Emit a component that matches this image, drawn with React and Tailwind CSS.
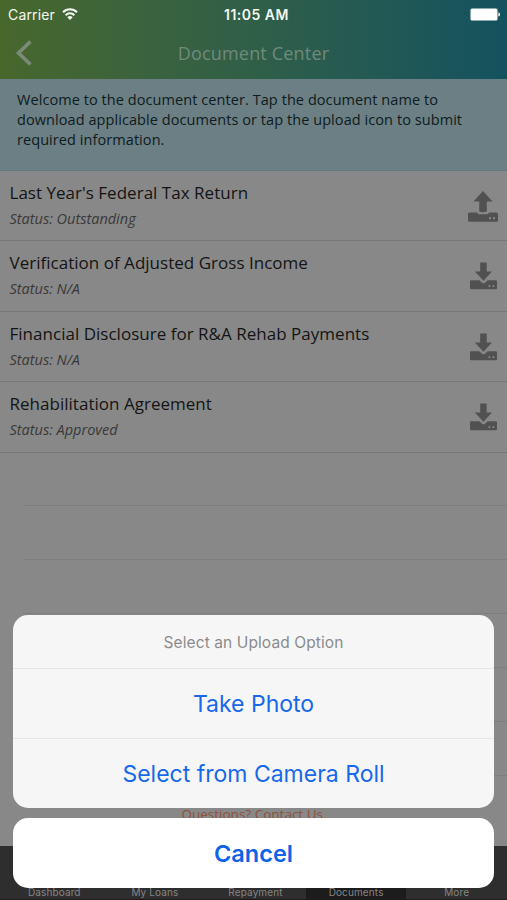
import React from "react";

const documents = [
  { name: "Last Year's Federal Tax Return", status: "Outstanding", upload: true, height: "h-[70px]" },
  { name: "Verification of Adjusted Gross Income", status: "N/A", height: "h-[71px]" },
  { name: "Financial Disclosure for R&A Rehab Payments", status: "N/A", height: "h-[70px]" },
  { name: "Rehabilitation Agreement", status: "Approved", height: "h-[71px]" },
];

const tabs = ["Dashboard", "My Loans", "Repayment", "Documents", "More"];

function WifiIcon() {
  return (
    <svg width="16" height="13" viewBox="0 0 16 13" fill="none" stroke="#f4f8f2" strokeWidth="2">
      <path d="M1 4.2a10 10 0 0 1 14 0" />
      <path d="M3.6 7.2a6.2 6.2 0 0 1 8.8 0" />
      <path d="M8 12.1 5.3 9.3a3.8 3.8 0 0 1 5.4 0z" fill="#f4f8f2" stroke="none" />
    </svg>
  );
}

function BatteryIcon() {
  return (
    <svg width="31" height="13" viewBox="0 0 31 13" fill="#fff">
      <rect x="0.5" y="0.5" width="27" height="12" rx="1.5" />
      <path d="M28.4 4.5c2.2.4 2.2 3.6 0 4z" />
    </svg>
  );
}

function TransferIcon({ upload }) {
  return upload ? (
    <svg width="30" height="31" viewBox="0 0 30 31" fill="#515151">
      <path d="M15 0 24.5 10.5H18.8v10q-3.8 1.5-7.6 0v-10H5.5z" />
      <path d="M1.5 21.5H8.7l1.8 1.7h9l1.8-1.7h7.2q1.5 0 1.5 1.5v6.2q0 1.5-1.5 1.5h-27q-1.5 0-1.5-1.5V23q0-1.5 1.5-1.5z" />
      <path d="M21 26.3h2v2h-2zM25 26.3h2v2h-2z" fill="#888" />
    </svg>
  ) : (
    <svg className="mt-px" width="27" height="28" viewBox="0 0 27 28" fill="#515151">
      <path d="M10.2 0.5h6.5v9h5.3L13.5 18.7 4.8 9.5h5.4z" />
      <path d="M1.2 18.3h8.1l2.7 2.4q1.5 1.1 3 0l2.7-2.4h8.1q1.2 0 1.2 1.2v6.5q0 1.2-1.2 1.2H1.2Q0 27.2 0 26v-6.500q0-1.200 1.200-1.200z" />
      <path d="M18.5 23.2h1.800V25h-1.800zM22.500 23.200h1.800V25h-1.800z" fill="#888" />
    </svg>
  );
}

function Header() {
  return (
    <header className="h-[79px] shrink-0 bg-linear-to-r from-[#47672b] via-[#305f48] to-[#13525f]">
      <div className="grid h-[28px] grid-cols-3 items-center font-['Inter',sans-serif] text-[#f4f8f2]">
        <div className="flex items-center gap-[7px] pl-2">
          <span className="w-[47px] text-[14px] tracking-[0.15px] whitespace-nowrap">Carrier</span>
          <WifiIcon />
        </div>
        <div className="pl-[6px] text-center text-[14px] font-semibold tracking-[0.5px] whitespace-nowrap">11:05 AM</div>
        <div className="flex justify-end pr-[6px]">
          <BatteryIcon />
        </div>
      </div>
      <div className="grid h-[50px] grid-cols-[1fr_auto_1fr] items-center">
        <svg className="ml-[15px]" width="18" height="26" viewBox="0 0 18 26" fill="none" stroke="#7b8b78" strokeWidth="3.6">
          <path d="M15.5 1.5 3.500 13l12 11.500" />
        </svg>
        <h1 className="text-[18px] tracking-[0.18px] whitespace-nowrap text-[#708a7c]">Document Center</h1>
      </div>
    </header>
  );
}

function DocumentRow({ doc }) {
  return (
    <li className={`flex items-start justify-between border-b border-[#777] pl-[9.5px] ${doc.height}`}>
      <div className="pt-[10px] whitespace-nowrap">
        <p className="text-[17px] leading-6 tracking-[0.02px] text-[#141414]">{doc.name}</p>
        <p className="mt-[4px] text-[14.5px] leading-5 text-[#393939] italic">Status: {doc.status}</p>
      </div>
      <div className="flex w-[48px] justify-center pt-[20px]">
        <TransferIcon upload={doc.upload} />
      </div>
    </li>
  );
}

function ActionSheet() {
  return (
    <div className="absolute inset-x-[13px] top-[615px] flex flex-col gap-[10px] text-center font-['Inter',sans-serif] text-[#1768ea]">
      <div className="flex h-[193px] flex-col overflow-hidden rounded-[15px] bg-[#f6f6f6]">
        <div className="flex h-[54px] items-center justify-center border-b border-[#e6e6e8] pt-[2px] text-[15.5px] tracking-[0.1px] text-[#8b8b8d]">
          <span>Select an Upload Option</span>
        </div>
        <button className="h-[70px] border-b border-[#e6e6e8] pt-[2px] text-[23px]">Take Photo</button>
        <button className="h-[69px] pt-[2px] text-[23px]">Select from Camera Roll</button>
      </div>
      <button className="h-[70px] rounded-[15px] bg-white pt-px text-[23.5px] font-semibold text-[#0e61e9]">Cancel</button>
    </div>
  );
}

export default function App() {
  return (
    <div className="relative flex h-[900px] w-[507px] flex-col overflow-hidden bg-[#888] font-['Open_Sans',sans-serif]">
      <Header />
      <section className="h-[92px] shrink-0 border-b border-[#637981] bg-[#6c7f84] pt-[11px] pl-[17px] text-[14.5px] leading-5 tracking-[0.07px] text-[#0d1c20]">
        <p className="whitespace-nowrap">
          Welcome to the document center. Tap the document name to
          <br />
          download applicable documents or tap the upload icon to submit
          <br />
          required information.
        </p>
      </section>
      <ul className="shrink-0">
        {documents.map((doc) => (
          <DocumentRow key={doc.name} doc={doc} />
        ))}
      </ul>
      <div className="-mt-px flex shrink-0 flex-col pl-[23px]">
        {[0, 1, 2, 3, 4, 5].map((line) => (
          <div key={line} className="h-[54px] border-b border-[#7e7e7e]" />
        ))}
      </div>
      <p className="mt-[28px] shrink-0 pl-px text-center text-[13.5px] leading-5 text-[#8f5038]">Questions? Contact Us.</p>
      <nav className="mt-auto grid h-[54px] shrink-0 grid-cols-5 border-b border-[#201a1c] bg-[#2e2e2e] pl-[4px] font-['Inter',sans-serif] text-[10px] tracking-[0.12px] text-[#858585]">
        {tabs.map((tab) => (
          <div key={tab} className={`flex items-end justify-center leading-[13px] ${tab === "Documents" ? "bg-[#1c1c1c]" : ""}`}>
            {tab}
          </div>
        ))}
      </nav>
      <ActionSheet />
    </div>
  );
}
